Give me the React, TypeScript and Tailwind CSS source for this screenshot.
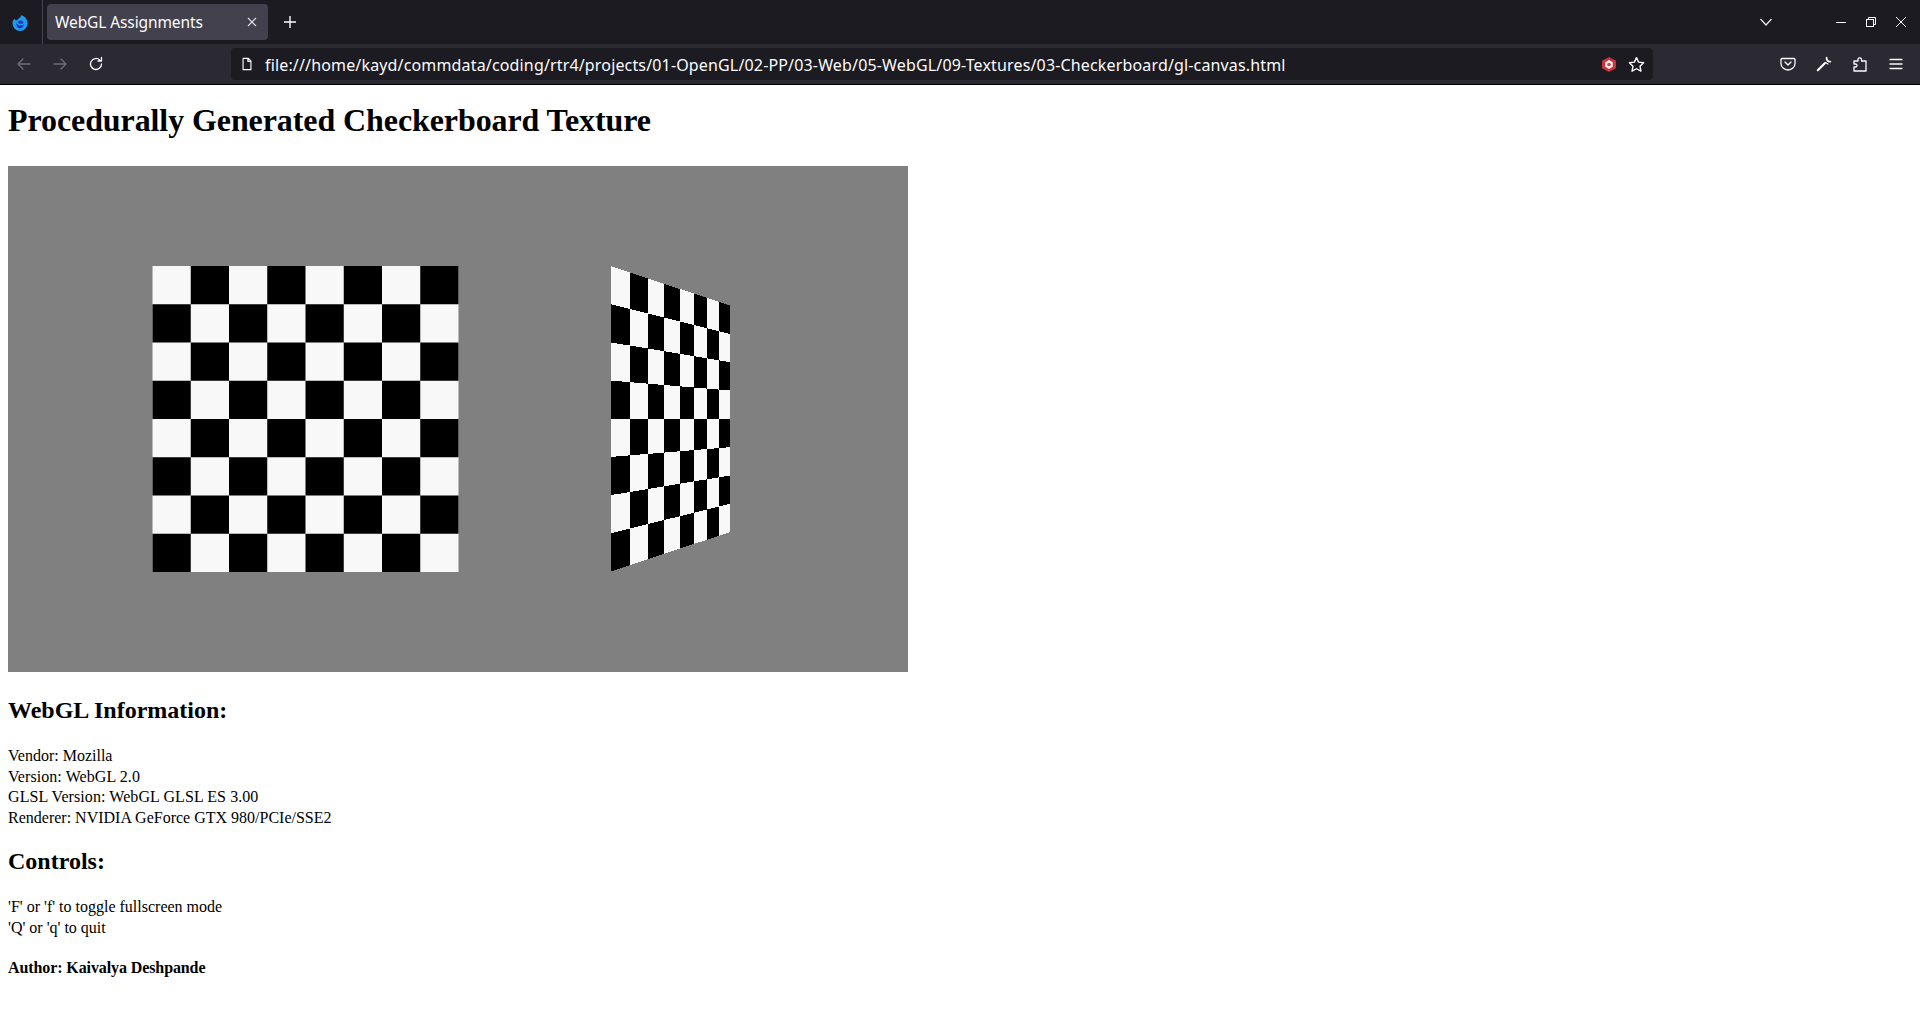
import React from "react";

const LEFT_X = 152.5 - 8;
const CELL = 38.25;
const TOP = 266 - 166;

function Flat() {
  const cells: React.ReactElement[] = [];
  cells.push(<rect key="bg" x={LEFT_X} y={TOP} width={CELL * 8} height={CELL * 8} fill="#f8f8f8" />);
  for (let r = 0; r < 8; r++)
    for (let c = 0; c < 8; c++)
      if ((r + c) % 2 === 1)
        cells.push(<rect key={`${r}-${c}`} x={LEFT_X + c * CELL} y={TOP + r * CELL} width={CELL} height={CELL} fill="#000" />);
  return <>{cells}</>;
}

const COLS = [62, 120, 174, 222, 270, 312, 352, 388, 421].map((v) => 590 + v / 3 - 8);
function Tilted() {
  const x0 = COLS[0], x1 = COLS[8];
  const yAt = (x: number, r: number) => {
    const t = (x - x0) / (x1 - x0);
    const top = 266 + t * (305.7 - 266);
    const bot = 571.5 + t * (532 - 571.5);
    return top + ((bot - top) * r) / 8 - 166;
  };
  const out: React.ReactElement[] = [];
  for (let r = 0; r < 8; r++)
    for (let c = 0; c < 8; c++) {
      const a = COLS[c], b = COLS[c + 1];
      out.push(
        <polygon
          key={`${r}-${c}`}
          points={`${a},${yAt(a, r)} ${b},${yAt(b, r)} ${b},${yAt(b, r + 1)} ${a},${yAt(a, r + 1)}`}
          fill={(r + c) % 2 === 1 ? "#000" : "#f8f8f8"}
          shapeRendering="crispEdges"
        />
      );
    }
  return <>{out}</>;
}

const I = ({ children, w = 16, h = 16, vb = "0 0 16 16" }: { children: React.ReactNode; w?: number; h?: number; vb?: string }) => (
  <svg width={w} height={h} viewBox={vb} fill="none" stroke="#fbfbfe" strokeWidth="1.3" strokeLinecap="round" strokeLinejoin="round">
    {children}
  </svg>
);

export default function App() {
  return (
    <div className="min-h-[1016px] bg-white text-black font-['Liberation_Serif',serif]">
      <div className="h-[44px] bg-[#1c1b22] flex items-center font-['Noto_Sans',sans-serif]">
        <div className="w-[43px] h-[44px] flex items-center justify-center pr-[3px] pt-[1px] border-r border-[#45434f]">
          <svg width="16" height="16" viewBox="0 0 16 16">
            <path d="M9.500 0c3.500 1.500 6 4.500 6 8.500a7.500 7.500 0 0 1-15 0C.5 6.500 1.200 5 2.500 3.800 3 5 4 5.500 5 5.200 6.500 3.500 8.500 2.500 9.500 0z" fill="#1e9bf0" />
            <path d="M4.500 8c1 2.500 4.500 3.500 7.500 1.500-.5 2.500-2.500 4-4.500 3.700C5.500 13 4 10.500 4.500 8z" fill="#2a2fb0" />
            <path d="M5.500 7c1.500-1.500 3.500-2 5-1 .8.600 1 1.500.8 2.300-1.500 1-4.800.9-5.800-1.300z" fill="#1b3fbf" />
          </svg>
        </div>
        <div className="ml-[4px] w-[221px] h-[36px] rounded-[4px] bg-[#42414d] flex items-center pl-[8px] pr-[11px] justify-between">
          <span className="text-[15.500px] tracking-[-0.1px] text-[#fbfbfe] whitespace-nowrap pt-[2px]">WebGL Assignments</span>
          <svg width="10" height="10" viewBox="0 0 10 10" stroke="#e0e0e6" strokeWidth="1.1"><path d="M1 1l8 8M9 1l-8 8" /></svg>
        </div>
        <div className="ml-[15px]">
          <svg width="14" height="14" viewBox="0 0 14 14" stroke="#fbfbfe" strokeWidth="1.4"><path d="M7 1v12M1 7h12" /></svg>
        </div>
        <div className="ml-auto flex items-center">
          <svg width="12" height="8" viewBox="0 0 12 8" fill="none" stroke="#e8e8ec" strokeWidth="1.3"><path d="M0.500 1l5.500 6 5.500-6" /></svg>
          <div className="ml-[64px] mr-[14px] flex items-center gap-[20px]">
            <svg width="10" height="10" viewBox="0 0 10 10" stroke="#fbfbfe" strokeWidth="1"><path d="M0 5.500h10" /></svg>
            <svg width="10" height="10" viewBox="0 0 10 10" fill="none" stroke="#fbfbfe" strokeWidth="1"><rect x="0.500" y="2.500" width="7" height="7" /><path d="M2.500 2.500v-2h7v7h-2" /></svg>
            <svg width="10" height="10" viewBox="0 0 10 10" stroke="#fbfbfe" strokeWidth="1"><path d="M0 0l10 10M10 0L0 10" /></svg>
          </div>
        </div>
      </div>
      <div className="h-[40px] bg-[#2b2a33] flex items-center border-b border-black box-content">
        <div className="w-[231px] pl-[16px] flex items-center gap-[20px] shrink-0">
          <I><path d="M14 8H2M7 3L2 8l5 5" stroke="#6f6e76" /></I>
          <I><path d="M2 8h12M9 3l5 5-5 5" stroke="#6f6e76" /></I>
          <I><path d="M13.500 8a5.500 5.500 0 1 1-1.700-4M13.500 1.500v3.500H10" /></I>
        </div>
        <div className="w-[1422px] h-[32px] rounded-[4px] bg-[#1c1b22] flex items-center pl-[9px] pr-[8px] font-['Noto_Sans',sans-serif]">
          <I w={14} h={14}><path d="M3.500 1.500h6l3 3v10h-9zM9 1.500v3.500h3.500" /></I>
          <span className="ml-[11px] text-[16px] tracking-[0.155px] text-[#fbfbfe] whitespace-nowrap pt-[2px]">file:///home/kayd/commdata/coding/rtr4/projects/01-OpenGL/02-PP/03-Web/05-WebGL/09-Textures/03-Checkerboard/gl-canvas.html</span>
          <div className="ml-auto flex items-center gap-[12px]">
            <svg width="14" height="15" viewBox="0 0 14 15"><path d="M7 0l7 3.750v7.500L7 15l-7-3.750v-7.500z" fill="#c9333a" /><path d="M7 3l3.800 2.200v4.600L7 12l-3.800-2.200V5.200z" fill="#eeeeee" /><circle cx="7" cy="7.500" r="1.800" fill="#d8434a" /></svg>
            <I w={17} h={17}><path d="M8 1.500l2 4.300 4.700.6-3.400 3.200.9 4.700L8 12l-4.200 2.300.9-4.700L1.300 6.400 6 5.800z" /></I>
          </div>
        </div>
        <div className="ml-auto mr-[16px] flex items-center gap-[20px]">
          <I><path d="M2 2.500h12a1 1 0 0 1 1 1v4a7 6.500 0 0 1-14 0v-4a1 1 0 0 1 1-1zM5 6l3 3 3-3" /></I>
          <I>
            <path d="M1.800 14.200L8.800 7.200" strokeWidth="2.200" />
            <path d="M10.600 1.700A3.300 3.300 0 0 0 14.300 5.600" strokeWidth="1.800" />
            <path d="M9.500 6.500L12 8" strokeWidth="1.300" />
          </I>
          <I><path d="M2 15v-4h1.500a1.500 1.500 0 0 0 0-3H2V5h4V3a2 2 0 0 1 3.500 0v2h4.500v10z" /></I>
          <I><path d="M2 3.500h12M2 8h12M2 12.500h12" /></I>
        </div>
      </div>
      <main className="px-[8px]">
        <h1 className="text-[32px] font-bold leading-[37px] tracking-[-0.09px] pt-[17px] mb-[27px]">Procedurally Generated Checkerboard Texture</h1>
        <div className="w-[900px] h-[506px] bg-[#808080]">
          <svg width="900" height="506" viewBox="0 0 900 506">
            <Flat />
            <Tilted />
          </svg>
        </div>
        <h2 className="text-[24px] font-bold leading-[28px] mt-[24px] mb-[22px]">WebGL Information:</h2>
        <p className="text-[16px] leading-[20.5px]">
          Vendor: Mozilla<br />
          <span className="tracking-[0.07px]">Version: WebGL 2.0</span><br />
          <span className="tracking-[0.08px]">GLSL Version: WebGL GLSL ES 3.00</span><br />
          Renderer: NVIDIA GeForce GTX 980/PCIe/SSE2
        </p>
        <h2 className="text-[24px] font-bold leading-[28px] mt-[19px] mb-[22px]">Controls:</h2>
        <p className="text-[16px] leading-[20.5px]">'F' or 'f' to toggle fullscreen mode<br />'Q' or 'q' to quit</p>
        <p className="text-[16px] leading-[20.5px] font-bold tracking-[-0.1px] mt-[20px]">Author: Kaivalya Deshpande</p>
      </main>
    </div>
  );
}
